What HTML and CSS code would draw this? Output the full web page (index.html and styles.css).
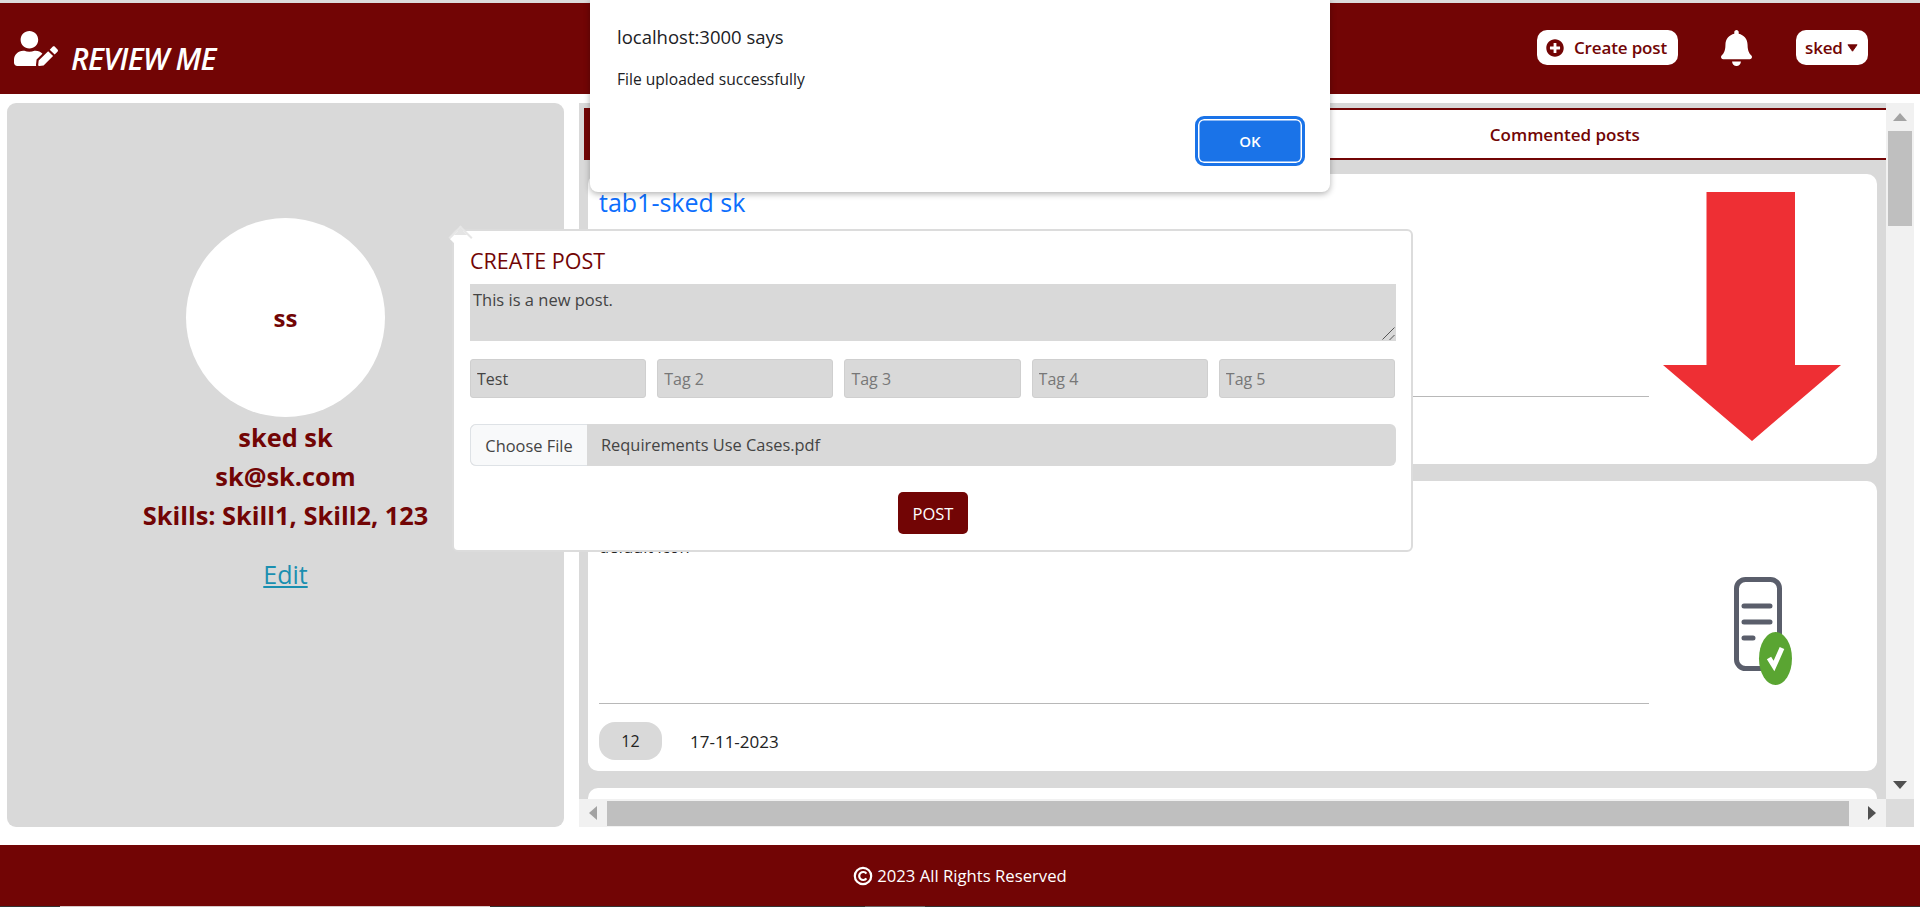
FILE: index.html
```html
<!DOCTYPE html>
<html lang="en">
  <head>
    <meta charset="UTF-8" />
    <title>Review Me</title>
    <link rel="stylesheet" href="styles.css">
  </head>
  <body>
    <div class="top-edge"></div>

    <!-- header -->
    <header class="site-header">
      <a class="logo">
        <svg class="logo-icon" viewBox="0 0 640 512" preserveAspectRatio="none"><path d="M224 256c70.7 0 128-57.3 128-128S294.7 0 224 0 96 57.3 96 128s57.3 128 128 128zm89.6 32h-16.7c-22.2 10.2-46.9 16-72.9 16s-50.6-5.8-72.9-16h-16.7C60.2 288 0 348.2 0 422.4V464c0 26.5 21.5 48 48 48h274.9c-2.4-6.8-3.4-14-2.6-21.3l6.8-60.9 1.2-11.1 7.9-7.9 77.3-77.3c-24.5-27.7-60-45.5-99.9-45.5zm45.3 145.3l-6.8 61c-1.1 10.2 7.5 18.8 17.6 17.6l60.9-6.8 137.9-137.9-71.7-71.7-137.9 137.8zM633 268.9L595.1 231c-9.3-9.3-24.5-9.3-33.8 0l-37.8 37.8-4.1 4.1 71.8 71.7 41.8-41.8c9.3-9.4 9.3-24.5 0-33.9z"/></svg>
        <span class="logo-text">REVIEW ME</span>
      </a>
      <div class="header-actions">
        <button class="header-btn create-btn">
          <svg class="plus-icon" viewBox="0 0 512 512"><path d="M256 8C119 8 8 119 8 256s111 248 248 248 248-111 248-248S393 8 256 8zm144 276c0 6.6-5.4 12-12 12h-92v92c0 6.6-5.4 12-12 12h-56c-6.6 0-12-5.4-12-12v-92h-92c-6.6 0-12-5.4-12-12v-56c0-6.6 5.4-12 12-12h92v-92c0-6.6 5.4-12 12-12h56c6.6 0 12 5.4 12 12v92h92c6.6 0 12 5.4 12 12v56z"/></svg>
          Create post
        </button>
        <svg class="bell-icon" viewBox="0 0 448 512" preserveAspectRatio="none"><path d="M224 512c35.32 0 63.97-28.65 63.97-64H160.03c0 35.35 28.65 64 63.97 64zm215.39-149.71c-19.32-20.76-55.47-51.99-55.47-154.29 0-77.7-54.48-139.9-127.94-155.16V32c0-17.67-14.32-32-31.98-32s-31.98 14.33-31.98 32v20.84C118.56 68.1 64.08 130.3 64.08 208c0 102.3-36.15 133.53-55.47 154.29-6 6.45-8.66 14.16-8.61 21.71.11 16.4 12.98 32 32.1 32h383.8c19.12 0 32-15.6 32.1-32 .05-7.55-2.61-15.27-8.61-21.71z"/></svg>
        <button class="header-btn user-btn">
          sked
          <svg class="caret" viewBox="0 0 12 8"><path d="M1 0.5H11L6 7.5Z" stroke="#720505" stroke-linejoin="round"/></svg>
        </button>
      </div>
    </header>

    <main class="page-main">
      <!-- profile -->
      <aside class="profile">
        <div class="avatar">ss</div>
        <div class="profile-line">sked sk</div>
        <div class="profile-line">sk@sk.com</div>
        <div class="profile-line">Skills: Skill1, Skill2, 123</div>
        <a class="edit-link">Edit</a>
      </aside>

      <!-- posts -->
      <section class="feed">
        <div class="feed-view">
          <div class="tabs">
            <div class="tab tab-active"></div>
            <div class="tab">Commented posts</div>
          </div>
          <div class="cards">
            <article class="card">
              <div class="card-body">
                <div class="card-title">tab1-sked sk</div>
                <div class="card-text"></div>
                <div class="card-meta"></div>
              </div>
              <div class="card-image">
                <svg class="arrow-pic" viewBox="0 0 178 249"><polygon points="43.5,0 132,0 132,173 178,173 89,249 0,173 43.5,173"/></svg>
              </div>
            </article>
            <article class="card">
              <div class="card-body">
                <div class="card-title"></div>
                <div class="card-text">default icon</div>
                <div class="card-meta">
                  <span class="pill">12</span>
                  <span class="card-date">17-11-2023</span>
                </div>
              </div>
              <div class="card-image">
                <svg class="doc-pic" viewBox="0 0 58 108">
                  <rect x="2.5" y="2.5" width="43" height="89" rx="9" fill="none" stroke="#5a5e6b" stroke-width="5"/>
                  <path d="M10 29H36M10 45H36M10 61H19" fill="none" stroke="#5a5e6b" stroke-width="5" stroke-linecap="round"/>
                  <ellipse cx="41.5" cy="81.5" rx="16.5" ry="26.5" fill="#5aa532"/>
                  <path d="M35 81l5 8 8-18" fill="none" stroke="#fff" stroke-width="5"/>
                </svg>
              </div>
            </article>
            <article class="card"></article>
          </div>
        </div>

        <!-- scrollbars -->
        <div class="vbar">
          <div class="vbar-end"><span class="tri tri-up"></span></div>
          <div class="vbar-thumb"></div>
          <div class="vbar-end vbar-bottom"><span class="tri tri-down"></span></div>
        </div>
        <div class="hbar">
          <div class="hbar-end"><span class="tri tri-left"></span></div>
          <div class="hbar-thumb"></div>
          <div class="hbar-end hbar-right"><span class="tri tri-right"></span></div>
        </div>
        <div class="bar-corner"></div>
      </section>
    </main>

    <!-- footer -->
    <footer class="site-footer">
      <svg class="copy-icon" viewBox="0 0 20 20"><circle cx="10" cy="10" r="8.2" fill="none" stroke="#fff" stroke-width="2.2"/><path d="M13.4 7.6a4 4 0 1 0 0 4.8" fill="none" stroke="#fff" stroke-width="2.2"/></svg>
      2023 All Rights Reserved
    </footer>
    <div class="bottom-edge"><span class="edge-light"></span><span class="edge-mid"></span></div>

    <!-- create post popup -->
    <div class="post-modal">
      <span class="modal-arrow"></span>
      <h2 class="modal-title">CREATE POST</h2>
      <div class="post-input-wrap">
        <textarea class="post-input">This is a new post.</textarea>
        <svg class="resize-grip" viewBox="0 0 13 13"><path d="M12.5 0.5L0.5 12.5M12.5 8L7.5 13" fill="none" stroke="#555" stroke-width="1"/></svg>
      </div>
      <div class="tag-row">
        <input class="tag-input" type="text" value="Test" />
        <input class="tag-input" type="text" placeholder="Tag 2" />
        <input class="tag-input" type="text" placeholder="Tag 3" />
        <input class="tag-input" type="text" placeholder="Tag 4" />
        <input class="tag-input" type="text" placeholder="Tag 5" />
      </div>
      <div class="file-row">
        <span class="file-btn">Choose File</span>
        <span class="file-name">Requirements Use Cases.pdf</span>
      </div>
      <div class="modal-actions">
        <button class="post-btn">POST</button>
      </div>
    </div>

    <!-- browser alert -->
    <div class="alert-box">
      <div class="alert-origin">localhost:3000 says</div>
      <div class="alert-msg">File uploaded successfully</div>
      <div class="alert-actions">
        <button class="alert-ok">OK</button>
      </div>
    </div>
  </body>
</html>
```

FILE: styles.css
```css
* {
  margin: 0;
  padding: 0;
  box-sizing: border-box;
}

body {
  width: 1920px;
  height: 907px;
  overflow: hidden;
  display: flex;
  flex-direction: column;
  background: #fff;
  font-family: "Open Sans", "Noto Sans", sans-serif;
  color: #222;
}

.top-edge {
  height: 3px;
  background: #dcdcdc;
}

/* ============== header ============== */
.site-header {
  height: 91px;
  background: #720505;
  display: flex;
  justify-content: space-between;
  padding: 25px 52px 0 14px;
}

.logo {
  display: flex;
  align-items: flex-end;
  height: 46px;
  gap: 13px;
}

.logo-icon {
  width: 44px;
  height: 35px;
  fill: #fff;
  margin-bottom: 8px;
}

.logo-text {
  color: #fff;
  font-size: 30px;
  font-weight: 600;
  font-style: italic;
  letter-spacing: -0.7px;
  line-height: 30px;
}

.header-actions {
  display: flex;
  align-items: flex-start;
  padding-top: 2px;
}

.header-btn {
  height: 35px;
  background: #fff;
  border: none;
  border-radius: 10px;
  color: #720505;
  font-family: inherit;
  font-size: 17px;
  font-weight: 600;
  letter-spacing: -0.15px;
  display: flex;
  align-items: center;
}

.create-btn {
  width: 141px;
  padding-left: 9px;
  gap: 10px;
}

.plus-icon {
  width: 18px;
  height: 18px;
  fill: #720505;
}

.bell-icon {
  width: 31px;
  height: 36px;
  fill: #fff;
  margin: 0 44px 0 43px;
}

.user-btn {
  width: 72px;
  padding-left: 9px;
  gap: 4px;
}

.caret {
  width: 11px;
  height: 8px;
  fill: #720505;
}

/* ============== main ============== */
.page-main {
  height: 724px;
  margin-top: 9px;
  padding: 0 6px 0 7px;
  display: flex;
  gap: 15px;
}

.profile {
  width: 557px;
  background: #d9d9d9;
  border-radius: 9px;
  display: flex;
  flex-direction: column;
  align-items: center;
  padding-top: 115px;
}

.avatar {
  width: 199px;
  height: 199px;
  border-radius: 50%;
  background: #fff;
  color: #720505;
  font-size: 24px;
  font-weight: 700;
  display: flex;
  align-items: center;
  justify-content: center;
  margin-bottom: 1px;
}

.profile-line {
  color: #720505;
  font-size: 25.4px;
  font-weight: 700;
  line-height: 39px;
  white-space: nowrap;
}

.edit-link {
  color: #1a8fb0;
  font-size: 25px;
  line-height: 39px;
  margin-top: 20px;
  text-decoration: underline;
}

/* ============== feed ============== */
.feed {
  flex: 1;
  display: grid;
  grid-template-columns: 1fr 28px;
  grid-template-rows: 1fr 28px;
  min-width: 0;
}

.feed-view {
  background: #d9d9d9;
  overflow: hidden;
  padding: 5px 0 0 5px;
}

.tabs {
  display: flex;
  height: 52px;
  gap: 7px;
}

.tab {
  flex: 1;
  background: #fff;
  border-top: 2px solid #720505;
  border-bottom: 2px solid #720505;
  color: #720505;
  font-size: 17px;
  font-weight: 600;
  padding-left: 5px;
  display: flex;
  align-items: center;
  justify-content: center;
}

.tab-active {
  background: #720505;
}

.cards {
  margin: 14px 9px 0 4px;
  display: flex;
  flex-direction: column;
  gap: 17px;
}

.card {
  height: 290px;
  flex: none;
  background: #fff;
  border-radius: 10px;
  display: flex;
}

.card-body {
  width: 1061px;
  padding: 12px 0 11px 11px;
  display: flex;
  flex-direction: column;
}

.card-title {
  min-height: 33px;
  color: #0d6efd;
  font-size: 25px;
  font-weight: 500;
  line-height: 33px;
}

.card-text {
  flex: 1;
  margin-top: 9px;
  font-size: 16.5px;
  line-height: 24px;
  color: #222;
}

.card-meta {
  min-height: 57px;
  border-top: 1px solid #b8b8b8;
  padding-top: 18px;
  display: flex;
  align-items: center;
  gap: 28px;
}

.pill {
  width: 63px;
  height: 38px;
  border-radius: 16px;
  background: #d9d9d9;
  font-size: 16px;
  display: flex;
  align-items: center;
  justify-content: center;
}

.card-date {
  font-size: 17px;
}

.card-image {
  flex: 1;
  display: flex;
  justify-content: center;
  align-items: flex-start;
  padding-right: 22px;
}

.arrow-pic {
  width: 178px;
  height: 249px;
  margin-top: 18px;
  fill: #ee2f34;
}

.doc-pic {
  width: 58px;
  height: 108px;
  margin: 96px 0 0 22px;
}

/* ============== scrollbars ============== */
.vbar {
  background: #f1f1f1;
  display: flex;
  flex-direction: column;
  align-items: center;
}

.vbar-end {
  height: 28px;
  width: 100%;
  display: flex;
  align-items: center;
  justify-content: center;
}

.vbar-bottom {
  margin-top: auto;
}

.vbar-thumb {
  width: 24px;
  height: 95px;
  background: #bfbfbf;
}

.hbar {
  background: #f1f1f1;
  display: flex;
  align-items: center;
}

.hbar-end {
  width: 28px;
  flex: none;
  display: flex;
  justify-content: center;
}

.hbar-right {
  width: 37px;
  padding-left: 8px;
}

.hbar-thumb {
  flex: 1;
  height: 25px;
  background: #bfbfbf;
}

.bar-corner {
  background: #dcdcdc;
}

.tri {
  display: block;
  width: 0;
  height: 0;
  border-style: solid;
  border-color: transparent;
}

.tri-up {
  border-width: 0 7px 8px;
  border-bottom-color: #a3a3a3;
}

.tri-down {
  border-width: 8px 7px 0;
  border-top-color: #505050;
}

.tri-left {
  border-width: 7px 8px 7px 0;
  border-right-color: #a3a3a3;
}

.tri-right {
  border-width: 7px 0 7px 8px;
  border-left-color: #505050;
}

/* ============== footer ============== */
.site-footer {
  height: 61px;
  margin-top: 18px;
  background: #720505;
  color: #fff;
  font-size: 16.7px;
  display: flex;
  align-items: center;
  justify-content: center;
  gap: 4px;
}

.copy-icon {
  width: 20px;
  height: 20px;
}

.bottom-edge {
  height: 1px;
  background: #333;
  display: flex;
  padding-left: 60px;
}

.edge-light {
  width: 430px;
  background: #d8c8c8;
}

.edge-mid {
  width: 60px;
  margin-left: 375px;
  background: #666;
}

/* ============== popup ============== */
.post-modal {
  position: absolute;
  left: 452px;
  top: 229px;
  width: 961px;
  height: 323px;
  background: #fff;
  border: 2px solid #dcdcdc;
  border-radius: 6px;
  padding: 16px 15px 0 16px;
}

.modal-arrow {
  position: absolute;
  left: -2px;
  top: -2px;
  width: 17px;
  height: 17px;
  background: linear-gradient(135deg, #e4e4e4 30%, #fff 30%);
  transform: rotate(45deg);
  border-left: 2px solid #e6e6e6;
  border-top: 2px solid #e6e6e6;
}

.modal-title {
  position: relative;
  color: #720505;
  font-size: 21.5px;
  font-weight: 400;
  line-height: 28px;
  margin-bottom: 9px;
}

.post-input-wrap {
  position: relative;
  height: 57px;
}

.post-input {
  display: block;
  width: 100%;
  height: 100%;
  background: #d9d9d9;
  border: none;
  outline: none;
  resize: none;
  padding: 4px 3px;
  font-family: inherit;
  font-size: 16.5px;
  color: #444;
}

.resize-grip {
  position: absolute;
  right: 1px;
  bottom: 1px;
  width: 13px;
  height: 13px;
}

.tag-row {
  display: flex;
  gap: 11px;
  margin-top: 18px;
  padding-right: 1px;
}

.tag-input {
  flex: 1;
  min-width: 0;
  height: 39px;
  background: #d9d9d9;
  border: 1px solid #cfcfcf;
  border-radius: 3px;
  outline: none;
  padding: 0 6px;
  font-family: inherit;
  font-size: 16px;
  color: #444;
}

.tag-input::placeholder {
  color: #777;
}

.file-row {
  display: flex;
  height: 42px;
  margin-top: 26px;
  background: #d9d9d9;
  border-radius: 6px;
  overflow: hidden;
  font-size: 16.4px;
  line-height: 41px;
  color: #444;
}

.file-btn {
  width: 117px;
  background: #f8f9fa;
  border: 1px solid #dee2e6;
  border-right: none;
  border-radius: 6px 0 0 6px;
  text-align: center;
}

.file-name {
  padding-left: 14px;
}

.modal-actions {
  display: flex;
  justify-content: center;
  margin-top: 26px;
}

.post-btn {
  width: 70px;
  height: 42px;
  background: #720505;
  color: #fff;
  border: none;
  border-radius: 5px;
  font-family: inherit;
  font-size: 16.5px;
}

/* ============== alert ============== */
.alert-box {
  position: absolute;
  left: 590px;
  top: 0;
  width: 740px;
  height: 192px;
  background: #fff;
  border-radius: 0 0 8px 8px;
  box-shadow: 0 2px 6px rgba(0, 0, 0, 0.3);
  padding: 24px 25px 0 27px;
}

.alert-origin {
  font-size: 18.5px;
  line-height: 26px;
  color: #202124;
}

.alert-msg {
  font-size: 15.6px;
  line-height: 22px;
  margin-top: 18px;
  color: #202124;
}

.alert-actions {
  display: flex;
  justify-content: flex-end;
  margin-top: 26px;
}

.alert-ok {
  width: 110px;
  height: 50px;
  background: #1a73e8;
  color: #fff;
  border: 3px solid #1a73e8;
  border-radius: 9px;
  font-family: inherit;
  font-size: 15px;
  font-weight: 600;
  box-shadow: inset 0 0 0 1.5px #fff;
}
```
